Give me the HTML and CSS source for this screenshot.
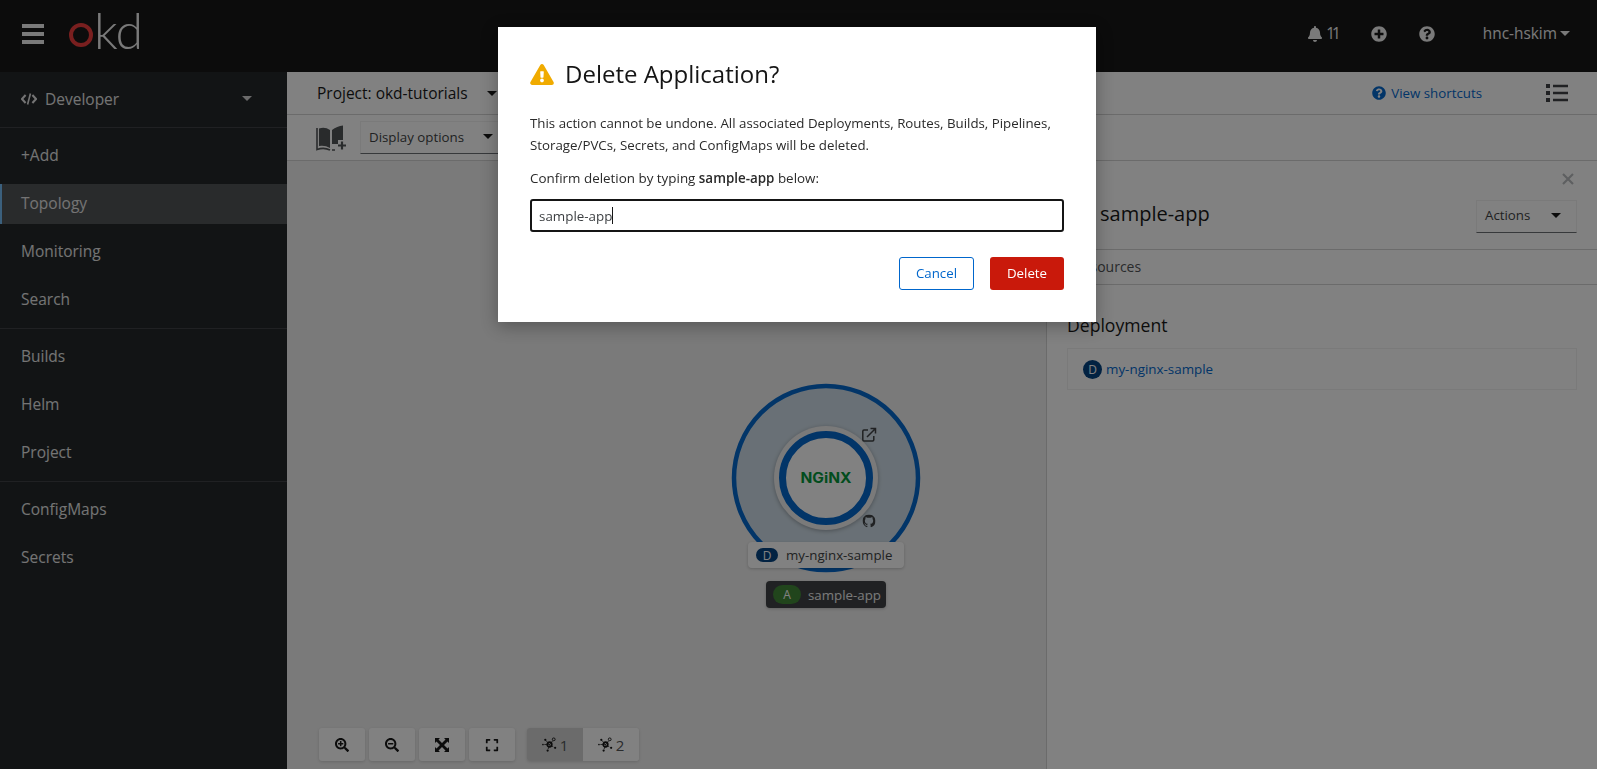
FILE: index.html
```html
<!DOCTYPE html>
<html lang="en">
<head>
    <meta charset="UTF-8">
    <meta name="viewport" content="width=device-width, initial-scale=1.0">
    <title>Topology - OKD</title>
    <link rel="stylesheet" href="styles.css">
</head>
<body>
    <header class="masthead">
        <div class="burger"><span></span><span></span><span></span></div>
        <div class="logo">
            <span class="logo-ring"></span>
            <span class="logo-text">kd</span>
        </div>
        <div class="masthead-tools">
            <span class="tool tool-bell">
                <svg class="icon" viewBox="0 0 448 512"><path d="M224 512c35.32 0 63.97-28.65 63.97-64H160.03c0 35.35 28.65 64 63.97 64zm215.39-149.71c-19.32-20.76-55.47-51.99-55.47-154.29 0-77.7-54.48-139.9-127.94-155.16V32c0-17.67-14.32-32-31.98-32s-31.98 14.33-31.98 32v20.84C118.56 68.1 64.08 130.3 64.08 208c0 102.3-36.15 133.53-55.47 154.29-6 6.45-8.66 14.16-8.61 21.71.11 16.4 12.98 32 32.1 32h383.8c19.12 0 32-15.6 32.1-32 .05-7.55-2.61-15.27-8.61-21.71z"/></svg>
                <span class="bell-count">11</span>
            </span>
            <svg class="icon tool-plus" viewBox="0 0 512 512"><path d="M256 8C119 8 8 119 8 256s111 248 248 248 248-111 248-248S393 8 256 8zm144 276c0 6.6-5.4 12-12 12h-92v92c0 6.6-5.4 12-12 12h-56c-6.6 0-12-5.4-12-12v-92h-92c-6.6 0-12-5.4-12-12v-56c0-6.6 5.4-12 12-12h92v-92c0-6.6 5.4-12 12-12h56c6.6 0 12 5.4 12 12v92h92c6.6 0 12 5.4 12 12v56z"/></svg>
            <svg class="icon tool-help" viewBox="0 0 512 512"><path d="M504 256c0 136.997-111.043 248-248 248S8 392.997 8 256C8 119.083 119.043 8 256 8s248 111.083 248 248zM262.655 90c-54.497 0-89.255 22.957-116.549 63.758-3.536 5.286-2.353 12.415 2.715 16.258l34.699 26.31c5.205 3.947 12.621 3.008 16.665-2.122 17.864-22.658 30.113-35.797 57.303-35.797 20.429 0 45.698 13.148 45.698 32.958 0 14.976-12.363 22.667-32.534 33.976C247.128 238.528 216 254.941 216 296v4c0 6.627 5.373 12 12 12h56c6.627 0 12-5.373 12-12v-1.333c0-28.462 83.186-29.647 83.186-106.667 0-58.002-60.165-102-116.531-102zM256 338c-25.365 0-46 20.635-46 46 0 25.364 20.635 46 46 46s46-20.636 46-46c0-25.365-20.635-46-46-46z"/></svg>
            <span class="user">hnc-hskim <i class="caret"></i></span>
        </div>
    </header>

    <div class="layout">
        <nav class="sidebar">
            <div class="perspective">
                <svg class="code-icon" viewBox="0 0 16 12"><path d="M4.6 2 1 6l3.6 4M11.4 2 15 6l-3.6 4" fill="none" stroke="currentColor" stroke-width="2"/><path d="M9.4.5 6.6 11.5" fill="none" stroke="currentColor" stroke-width="1.6"/></svg>
                <span class="perspective-name">Developer</span>
                <i class="caret"></i>
            </div>
            <div class="nav-group">
                <a class="nav-item">+Add</a>
                <a class="nav-item active">Topology</a>
                <a class="nav-item">Monitoring</a>
                <a class="nav-item">Search</a>
            </div>
            <div class="nav-group">
                <a class="nav-item">Builds</a>
                <a class="nav-item">Helm</a>
                <a class="nav-item">Project</a>
            </div>
            <div class="nav-group">
                <a class="nav-item">ConfigMaps</a>
                <a class="nav-item">Secrets</a>
            </div>
        </nav>

        <main class="content">
            <div class="project-bar">
                <span class="project-name">Project: okd-tutorials</span>
                <i class="caret dark"></i>
                <span class="shortcuts">
                    <svg class="icon" viewBox="0 0 512 512"><path d="M504 256c0 136.997-111.043 248-248 248S8 392.997 8 256C8 119.083 119.043 8 256 8s248 111.083 248 248zM262.655 90c-54.497 0-89.255 22.957-116.549 63.758-3.536 5.286-2.353 12.415 2.715 16.258l34.699 26.31c5.205 3.947 12.621 3.008 16.665-2.122 17.864-22.658 30.113-35.797 57.303-35.797 20.429 0 45.698 13.148 45.698 32.958 0 14.976-12.363 22.667-32.534 33.976C247.128 238.528 216 254.941 216 296v4c0 6.627 5.373 12 12 12h56c6.627 0 12-5.373 12-12v-1.333c0-28.462 83.186-29.647 83.186-106.667 0-58.002-60.165-102-116.531-102zM256 338c-25.365 0-46 20.635-46 46 0 25.364 20.635 46 46 46s46-20.636 46-46c0-25.365-20.635-46-46-46z"/></svg>
                    View shortcuts
                </span>
                <svg class="list-icon" viewBox="0 0 22 18"><path d="M0 0h4v4H0zM0 7h4v4H0zM0 14h4v4H0zM7 .8h15v2.400H7zM7 7.800h15v2.400H7zM7 14.800h15v2.400H7z"/></svg>
            </div>

            <div class="filter-bar">
                <svg class="book-icon" viewBox="0 0 30 26">
                    <path d="M3 3.500Q9 1.500 14 5v18q-5-3-11-2z" fill="currentColor"/>
                    <path d="M16 5q5-4 11-4.500V15h-5v4h-6z" fill="currentColor"/>
                    <path d="M1 3v21.500q7-2.500 13 .5M16 25h3" fill="none" stroke="currentColor" stroke-width="1.600"/>
                    <path d="M26 16.500v8M22 20.500h8" fill="none" stroke="currentColor" stroke-width="2.200"/>
                </svg>
                <span class="select-btn display-options">Display options <i class="caret dark"></i></span>
            </div>

            <div class="workspace">
                <section class="canvas">
                    <svg class="node-ring" viewBox="0 0 192 192">
                        <circle cx="96" cy="96" r="92" fill="#cfdde8" stroke="#0066cc" stroke-width="4.500"/>
                        <circle cx="96" cy="96" r="52" fill="#f0f0f0" class="node-shadow"/>
                        <circle cx="96" cy="96" r="43.500" fill="#fff" stroke="#0066cc" stroke-width="7"/>
                        <text x="96" y="100.500" text-anchor="middle" textLength="51" lengthAdjust="spacingAndGlyphs" class="nginx-text">NGiNX</text>
                        <g fill="none" stroke="#3c3f42" stroke-width="1.500">
                            <path d="M138 48h-4a1.200 1.200 0 0 0-1.200 1.200v8.600a1.200 1.200 0 0 0 1.200 1.200h8.600a1.200 1.200 0 0 0 1.200-1.200V54"/>
                            <path d="M137 55 145 47M140.500 46.500h5v5"/>
                        </g>
                        <svg x="132.500" y="132.500" width="13" height="13" viewBox="0 0 16 16"><path fill="#3c3f42" d="M8 0C3.580 0 0 3.580 0 8c0 3.540 2.290 6.530 5.470 7.590.4.07.55-.17.55-.38 0-.19-.01-.82-.01-1.490-2.010.37-2.530-.49-2.690-.94-.09-.23-.48-.94-.82-1.130-.28-.15-.68-.52-.01-.53.63-.01 1.080.58 1.230.82.72 1.210 1.870.87 2.330.66.07-.52.28-.87.51-1.070-1.780-.2-3.640-.89-3.640-3.950 0-.87.31-1.590.82-2.150-.08-.2-.36-1.020.08-2.120 0 0 .67-.21 2.200.82.64-.18 1.320-.27 2-.27.68 0 1.360.09 2 .27 1.530-1.040 2.200-.82 2.200-.82.44 1.100.16 1.920.08 2.120.51.56.82 1.270.82 2.150 0 3.070-1.870 3.750-3.650 3.950.29.25.54.73.54 1.480 0 1.070-.01 1.930-.01 2.200 0 .21.15.46.55.38A8.013 8.013 0 0 0 16 8c0-4.420-3.580-8-8-8z"/></svg>
                    </svg>
                    <div class="node-label deployment-label"><span class="badge badge-d">D</span>my-nginx-sample</div>
                    <div class="node-label app-label"><span class="badge badge-a">A</span>sample-app</div>

                    <div class="canvas-controls">
                        <button class="ctl"><svg class="ctl-icon" viewBox="0 0 512 512"><path d="M304 192v32c0 6.600-5.400 12-12 12h-56v56c0 6.600-5.400 12-12 12h-32c-6.600 0-12-5.400-12-12v-56h-56c-6.600 0-12-5.400-12-12v-32c0-6.600 5.400-12 12-12h56v-56c0-6.600 5.400-12 12-12h32c6.600 0 12 5.400 12 12v56h56c6.600 0 12 5.400 12 12zm201 284.700L476.700 505c-9.400 9.400-24.600 9.400-33.900 0L343 405.300c-4.500-4.500-7-10.600-7-17V372c-35.300 27.600-79.700 44-128 44C93.100 416 0 322.900 0 208S93.100 0 208 0s208 93.100 208 208c0 48.300-16.400 92.700-44 128h16.300c6.400 0 12.500 2.500 17 7l99.700 99.700c9.300 9.400 9.300 24.600 0 34zM344 208c0-75.200-60.800-136-136-136S72 132.800 72 208s60.800 136 136 136 136-60.800 136-136z"/></svg></button>
                        <button class="ctl"><svg class="ctl-icon" viewBox="0 0 512 512"><path d="M304 192v32c0 6.600-5.400 12-12 12H124c-6.600 0-12-5.400-12-12v-32c0-6.600 5.400-12 12-12h168c6.600 0 12 5.400 12 12zm201 284.700L476.700 505c-9.400 9.400-24.600 9.400-33.900 0L343 405.300c-4.500-4.500-7-10.600-7-17V372c-35.300 27.600-79.700 44-128 44C93.100 416 0 322.900 0 208S93.100 0 208 0s208 93.100 208 208c0 48.300-16.400 92.700-44 128h16.300c6.400 0 12.500 2.500 17 7l99.700 99.700c9.300 9.400 9.300 24.600 0 34zM344 208c0-75.200-60.800-136-136-136S72 132.800 72 208s60.800 136 136 136 136-60.800 136-136z"/></svg></button>
                        <button class="ctl"><svg class="ctl-icon" viewBox="0 0 14 14"><path d="M0 0h5L3.500 1.500 7 5l3.500-3.500L9 0h5v5l-1.500-1.500L9 7l3.500 3.500L14 9v5H9l1.500-1.500L7 9l-3.500 3.500L5 14H0V9l1.500 1.500L5 7 1.500 3.500 0 5z"/></svg></button>
                        <button class="ctl"><svg class="ctl-icon" viewBox="0 0 448 512"><path d="M0 180V56c0-13.300 10.700-24 24-24h124c6.600 0 12 5.400 12 12v40c0 6.600-5.400 12-12 12H64v84c0 6.600-5.400 12-12 12H12c-6.600 0-12-5.400-12-12zM288 44v40c0 6.600 5.400 12 12 12h84v84c0 6.600 5.400 12 12 12h40c6.600 0 12-5.400 12-12V56c0-13.300-10.700-24-24-24H300c-6.600 0-12 5.400-12 12zm148 276h-40c-6.600 0-12 5.400-12 12v84h-84c-6.600 0-12 5.400-12 12v40c0 6.600 5.400 12 12 12h124c13.300 0 24-10.700 24-24V332c0-6.600-5.400-12-12-12zM160 468v-40c0-6.600-5.400-12-12-12H64v-84c0-6.600-5.400-12-12-12H12c-6.600 0-12 5.400-12 12v124c0 13.300 10.700 24 24 24h124c6.600 0 12-5.400 12-12z"/></svg></button>
                        <div class="ctl-group">
                            <button class="ctl-split selected"><svg class="layout-icon" viewBox="0 0 16 16"><path d="M8 8 4 3.500M8 8l3.500-4M8 8l4 2.500M8 8l-1.500 5M8 8H2.500" fill="none" stroke="currentColor" stroke-width=".8"/><circle cx="8" cy="8" r="2.500" fill="none" stroke="currentColor" stroke-width="1.700"/><circle cx="3.500" cy="3" r="1.200"/><circle cx="12.500" cy="2.500" r="1.500" fill="none" stroke="currentColor" stroke-width="1"/><circle cx="14" cy="11.500" r="1.200"/><circle cx="6" cy="14.500" r="1.200"/><circle cx="1" cy="8" r=".9"/></svg>1</button>
                            <button class="ctl-split"><svg class="layout-icon" viewBox="0 0 16 16"><path d="M8 8 4 3.500M8 8l3.500-4M8 8l4 2.500M8 8l-1.500 5M8 8H2.500" fill="none" stroke="currentColor" stroke-width=".8"/><circle cx="8" cy="8" r="2.500" fill="none" stroke="currentColor" stroke-width="1.700"/><circle cx="3.500" cy="3" r="1.200"/><circle cx="12.500" cy="2.500" r="1.500" fill="none" stroke="currentColor" stroke-width="1"/><circle cx="14" cy="11.500" r="1.200"/><circle cx="6" cy="14.500" r="1.200"/><circle cx="1" cy="8" r=".9"/></svg>2</button>
                        </div>
                    </div>
                </section>

                <aside class="panel">
                    <div class="panel-close">
                        <svg viewBox="0 0 14 14"><path d="M2 2l10 10M12 2 2 12" stroke="currentColor" stroke-width="2.200" fill="none"/></svg>
                    </div>
                    <div class="panel-head">
                        <span class="badge badge-a panel-badge">A</span>
                        <h2 class="panel-title">sample-app</h2>
                        <span class="select-btn actions">Actions <i class="caret dark"></i></span>
                    </div>
                    <div class="panel-tabs"><span>Resources</span></div>
                    <div class="panel-body">
                        <h3 class="panel-section">Deployment</h3>
                        <div class="resource-row"><span class="circle-badge">D</span><a class="resource-link">my-nginx-sample</a></div>
                    </div>
                </aside>
            </div>
        </main>
    </div>

    <!-- delete confirmation -->
    <div class="backdrop">
        <div class="modal">
            <div class="modal-title">
                <svg class="warn-icon" viewBox="0 0 576 512"><path d="M569.517 440.013C587.975 472.007 564.806 512 527.940 512H48.054c-36.937 0-59.999-40.055-41.577-71.987L246.423 23.985c18.467-32.009 64.720-31.951 83.154 0l239.940 416.028zM288 354c-25.405 0-46 20.595-46 46s20.595 46 46 46 46-20.595 46-46-20.595-46-46-46zm-43.673-165.346l7.418 136c.347 6.364 5.609 11.346 11.982 11.346h48.546c6.373 0 11.635-4.982 11.982-11.346l7.418-136c.375-6.874-5.098-12.654-11.982-12.654h-63.383c-6.884 0-12.356 5.780-11.981 12.654z"/></svg>
                <h1>Delete Application?</h1>
            </div>
            <p class="modal-text">This action cannot be undone. All associated Deployments, Routes, Builds, Pipelines, Storage/PVCs, Secrets, and ConfigMaps will be deleted.</p>
            <p class="modal-confirm">Confirm deletion by typing <b>sample-app</b> below:</p>
            <div class="modal-input"><span>sample-app</span><i class="text-caret"></i></div>
            <div class="modal-actions">
                <button class="btn btn-cancel">Cancel</button>
                <button class="btn btn-delete">Delete</button>
            </div>
        </div>
    </div>
</body>
</html>
```

FILE: styles.css
```css
* {
    box-sizing: border-box;
}
html, body {
    height: 100%;
}
body {
    margin: 0;
    overflow: hidden;
    font-family: "Open Sans", "Liberation Sans", sans-serif;
    font-size: 14px;
    color: #151515;
    background-color: #fff;
}
h1, h2, h3, p {
    margin: 0;
    font-weight: 400;
}
button {
    font-family: inherit;
}
.icon {
    width: 16px;
    height: 16px;
    fill: currentColor;
}
.caret {
    display: inline-block;
    width: 0;
    height: 0;
    border-left: 5px solid transparent;
    border-right: 5px solid transparent;
    border-top: 5px solid #d2d2d2;
}
.caret.dark {
    border-top-color: #151515;
}

/* masthead */
.masthead {
    display: flex;
    align-items: center;
    height: 72px;
    padding-left: 22px;
    padding-right: 27px;
    background-color: #151515;
    color: #f0f0f0;
}
.burger {
    display: flex;
    flex-direction: column;
    gap: 4px;
    width: 22px;
    margin-bottom: 4px;
}
.burger span {
    height: 4px;
    background-color: #f0f0f0;
}
.logo {
    display: flex;
    align-items: flex-end;
    margin-left: 25px;
    margin-top: -13px;
}
.logo-ring {
    width: 24px;
    height: 24px;
    margin-bottom: 1px;
    border: 4px solid #ee3a3a;
    border-radius: 50%;
}
.logo-text {
    margin-left: 1px;
    font-family: "Lato", sans-serif;
    font-weight: 300;
    font-size: 50px;
    line-height: 36px;
    letter-spacing: -1px;
    color: #f0f0f0;
}
.masthead-tools {
    display: flex;
    align-items: center;
    margin-left: auto;
    margin-bottom: 5px;
    font-size: 15.400px;
}
.tool-bell {
    display: flex;
    align-items: center;
    gap: 3px;
}
.bell-count {
    margin-right: 2px;
    letter-spacing: -3px;
}
.tool-plus {
    margin-left: 31px;
}
.tool-help {
    margin-left: 32px;
}
.user {
    display: flex;
    align-items: center;
    gap: 3px;
    margin-left: 48px;
}
.user .caret {
    border-top-color: #f0f0f0;
}

/* sidebar */
.layout {
    display: grid;
    grid-template-columns: 287px 1fr;
    height: calc(100% - 72px);
}
.sidebar {
    background-color: #212427;
    color: #e4e4e4;
    font-size: 15.500px;
}
.perspective {
    display: flex;
    align-items: center;
    height: 56px;
    padding: 0 35px 2px 21px;
    border-bottom: 1px solid #3c3f42;
}
.code-icon {
    width: 16px;
    height: 12px;
}
.perspective-name {
    margin-left: 8px;
    flex: 1;
}
.nav-group {
    padding: 8px 0;
    border-bottom: 1px solid #3c3f42;
}
.nav-group:last-child {
    border-bottom: none;
}
.nav-item {
    display: flex;
    align-items: center;
    height: 40px;
    margin-bottom: 8px;
    padding-left: 21px;
    padding-bottom: 2px;
}
.nav-item:last-child {
    margin-bottom: 0;
}
.nav-item.active {
    background-color: #4f5255;
    border-left: 2px solid #73bcf7;
    padding-left: 19px;
}

/* project and filter bars */
.content {
    display: flex;
    flex-direction: column;
    min-width: 0;
    background-color: #fff;
}
.project-bar {
    display: flex;
    align-items: center;
    flex: none;
    height: 43px;
    padding: 0 29px 0 30px;
    border-bottom: 1px solid #d2d2d2;
    font-size: 15.500px;
}
.project-name {
    margin-right: 19px;
}
.shortcuts {
    display: flex;
    align-items: center;
    gap: 5px;
    margin-left: auto;
    margin-right: 64px;
    font-size: 13.300px;
    color: #0066cc;
}
.shortcuts .icon {
    width: 14px;
    height: 14px;
}
.list-icon {
    width: 22px;
    height: 18px;
    fill: #3c3f42;
}
.filter-bar {
    display: flex;
    align-items: center;
    flex: none;
    height: 46px;
    padding-left: 29px;
    border-bottom: 1px solid #d2d2d2;
}
.book-icon {
    width: 30px;
    height: 26px;
    color: #4f5255;
}
.select-btn {
    display: flex;
    align-items: center;
    justify-content: space-between;
    height: 33px;
    border: 1px solid #f0f0f0;
    border-bottom-color: #6a6e73;
    font-size: 13.300px;
    color: #3c3f42;
}
.display-options {
    width: 200px;
    margin-left: 14px;
    padding: 0 120px 2px 8px;
    white-space: nowrap;
    gap: 19px;
    justify-content: flex-start;
}

/* topology canvas */
.workspace {
    position: relative;
    display: flex;
    flex: 1;
    min-height: 0;
}
.canvas {
    position: relative;
    flex: 1;
    background-color: #f0f0f0;
}
.node-ring {
    position: absolute;
    left: 443px;
    top: 221px;
    width: 192px;
    height: 192px;
}
.node-shadow {
    filter: drop-shadow(0 1px 2px rgba(0, 0, 0, .3));
}
.nginx-text {
    font-family: "Inter", sans-serif;
    font-weight: 700;
    font-size: 14px;
    fill: #009639;
}
.node-label {
    position: absolute;
    display: flex;
    align-items: center;
    border-radius: 4px;
    font-size: 13.300px;
    box-shadow: 0 1px 3px rgba(0, 0, 0, .2);
}
.deployment-label {
    left: 461px;
    top: 381px;
    width: 156px;
    height: 26px;
    padding-left: 8px;
    background-color: #fff;
    color: #3c3f42;
}
.app-label {
    left: 479px;
    top: 420px;
    width: 120px;
    height: 27px;
    padding-left: 7px;
    background-color: #3c3f42;
    color: #f0f0f0;
}
.badge {
    display: flex;
    align-items: center;
    justify-content: center;
    flex: none;
    border-radius: 10px;
    color: #fff;
    font-size: 12px;
}
.badge-d {
    width: 22px;
    height: 14px;
    margin-right: 8px;
    background-color: #004080;
}
.badge-a {
    width: 28px;
    height: 19px;
    margin-right: 7px;
    background-color: #3e8635;
}
.canvas-controls {
    position: absolute;
    left: 32px;
    bottom: 8px;
    display: flex;
    gap: 4px;
}
.ctl, .ctl-split {
    display: flex;
    align-items: center;
    justify-content: center;
    height: 33px;
    padding: 0;
    border: none;
    background-color: #fff;
    color: #151515;
}
.ctl {
    width: 46px;
    border-radius: 3px;
    box-shadow: 0 1px 3px rgba(0, 0, 0, .15);
}
.ctl-icon {
    width: 14px;
    height: 14px;
    fill: currentColor;
}
.layout-icon {
    width: 15px;
    height: 15px;
    fill: currentColor;
    color: #151515;
}
.ctl-group {
    display: flex;
    margin-left: 8px;
    border-radius: 3px;
    overflow: hidden;
    box-shadow: 0 1px 3px rgba(0, 0, 0, .15);
}
.ctl-split {
    gap: 3px;
    width: 56px;
    font-size: 15px;
    color: #4f5255;
}
.ctl-split.selected {
    background-color: #d2d2d2;
}

/* side panel */
.panel {
    position: relative;
    flex: none;
    width: 551px;
    background-color: #fff;
    border-left: 1px solid #d2d2d2;
}
.panel-close {
    position: absolute;
    top: 11px;
    right: 22px;
    width: 14px;
    height: 14px;
    color: #b8bbbe;
}
.panel-close svg {
    display: block;
}
.panel-head {
    display: flex;
    align-items: center;
    height: 89px;
    padding: 16px 20px 0 20px;
    border-bottom: 1px solid #d2d2d2;
}
.panel-badge {
    margin-right: 5px;
}
.panel-title {
    flex: 1;
    font-size: 20px;
}
.actions {
    width: 101px;
    padding: 0 15px 2px 8px;
    margin-top: 6px;
}
.panel-tabs {
    display: flex;
    align-items: center;
    height: 35px;
    padding-left: 27px;
    padding-bottom: 2px;
    border-bottom: 1px solid #d2d2d2;
    font-size: 14px;
    color: #4f5255;
}
.panel-body {
    padding: 28px 20px 0 20px;
}
.panel-section {
    font-size: 17.600px;
    line-height: 24px;
}
.resource-row {
    display: flex;
    align-items: center;
    height: 42px;
    margin-top: 11px;
    padding-left: 15px;
    border: 1px solid #f0f0f0;
}
.circle-badge {
    display: flex;
    align-items: center;
    justify-content: center;
    width: 19px;
    height: 19px;
    margin-right: 4px;
    border-radius: 50%;
    background-color: #004080;
    color: #fff;
    font-size: 12px;
}
.resource-link {
    font-size: 13.400px;
    color: #0066cc;
}

/* modal */
.backdrop {
    position: fixed;
    inset: 0;
    display: flex;
    justify-content: center;
    align-items: flex-start;
    padding-top: 27px;
    padding-right: 3px;
    background-color: rgba(3, 3, 3, .5);
}
.modal {
    width: 598px;
    height: 295px;
    padding: 32px;
    background-color: #fff;
    color: #2a2a2a;
    box-shadow: 0 4px 16px rgba(3, 3, 3, .3);
}
.modal-title {
    display: flex;
    align-items: center;
    gap: 11px;
    height: 30px;
    color: #151515;
}
.warn-icon {
    width: 24px;
    height: 21px;
    fill: #f0ab00;
}
.modal-title h1 {
    font-size: 24px;
    line-height: 30px;
}
.modal-text {
    margin-top: 23px;
    font-size: 13.300px;
    line-height: 22px;
}
.modal-confirm {
    margin-top: 12px;
    font-size: 13.400px;
    line-height: 21px;
}
.modal-confirm b {
    font-weight: 600;
}
.modal-input {
    display: flex;
    align-items: center;
    height: 33px;
    margin-top: 10px;
    padding-left: 7px;
    border: 2px solid #151515;
    border-radius: 3px;
    font-size: 13.400px;
    color: #3c3f42;
}
.text-caret {
    width: 1px;
    height: 17px;
    background-color: #151515;
}
.modal-actions {
    display: flex;
    justify-content: flex-end;
    gap: 16px;
    margin-top: 25px;
}
.btn {
    height: 33px;
    padding-bottom: 3px;
    border-radius: 3px;
    font-size: 13.300px;
}
.btn-cancel {
    width: 75px;
    border: 1px solid #0066cc;
    background-color: #fff;
    color: #0066cc;
}
.btn-delete {
    width: 74px;
    border: none;
    background-color: #c9190b;
    color: #fff;
}
```
